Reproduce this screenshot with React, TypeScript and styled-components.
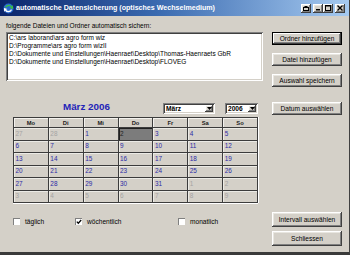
import React from "react";
import styled, { createGlobalStyle, css } from "styled-components";

const Global = createGlobalStyle`
  html, body { margin: 0; padding: 0; background: #d4d0c8; }
  body { font-family: "Liberation Sans", Arial, sans-serif; }
  * { box-sizing: border-box; }
`;

const raised = css`
  box-shadow: inset -1px -1px #404040, inset 1px 1px #ffffff,
    inset -2px -2px #808080, inset 2px 2px #e8e6e0;
`;
const sunken = css`
  box-shadow: inset 1px 1px #808080, inset -1px -1px #ffffff,
    inset 2px 2px #404040, inset -2px -2px #d4d0c8;
`;

const Window = styled.div`
  width: 350px;
  height: 255px;
  overflow: hidden;
  background: #d4d0c8;
  border-bottom: 3px solid #3a3a3a;
  border-right: 1px solid #404040;
  display: flex;
  flex-direction: column;
`;

const TitleBar = styled.div`
  height: 16px;
  flex: none;
  display: flex;
  align-items: center;
  padding: 0 4px 0 3px;
  background: linear-gradient(to right, #0a246a 0%, #3a6ab0 45%, #a6caf0 100%);
`;

const TitleText = styled.span`
  margin-left: 2px;
  color: #ffffff;
  font-weight: bold;
  font-size: 7.1px;
  white-space: nowrap;
`;

const CaptionGroup = styled.div`
  margin-left: auto;
  display: flex;
  align-items: center;
`;

const CaptionButton = styled.div<{ $gap?: number }>`
  width: 10px;
  height: 9px;
  margin-left: ${(p) => p.$gap ?? 0}px;
  background: #d4d0c8;
  ${raised};
  display: flex;
  align-items: center;
  justify-content: center;
`;

const Body = styled.div`
  flex: 1;
  padding-left: 6px;
  display: flex;
  flex-direction: column;
`;

const Section = styled.div<{ $h: number }>`
  height: ${(p) => p.$h}px;
  display: grid;
  grid-template-columns: 257px 70px;
  column-gap: 9px;
`;

const LeftCol = styled.div`
  display: flex;
  flex-direction: column;
`;

const Label = styled.div`
  margin-top: 6px;
  height: 8px;
  line-height: 8px;
  font-size: 6.5px;
  color: #000;
  white-space: nowrap;
`;

const ListBox = styled.div`
  margin-top: 2px;
  height: 49px;
  background: #ffffff;
  ${sunken};
  padding: 2px 3px;
`;

const ListItem = styled.div`
  height: 8px;
  line-height: 8px;
  font-size: 6.5px;
  color: #000;
  white-space: nowrap;
`;

const ButtonColumn = styled.div<{ $top: number; $gap: number }>`
  padding-top: ${(p) => p.$top}px;
  display: flex;
  flex-direction: column;
  gap: ${(p) => p.$gap}px;
`;

const Button = styled.div<{ $h: number; $default?: boolean }>`
  height: ${(p) => p.$h}px;
  width: 70px;
  background: #d4d0c8;
  display: flex;
  align-items: center;
  justify-content: center;
  font-size: 6.6px;
  color: #000;
  white-space: nowrap;
  ${(p) =>
    p.$default
      ? css`
          box-shadow: inset 0 0 0 1px #000, inset -2px -2px #404040,
            inset 2px 2px #ffffff, inset -3px -3px #808080;
        `
      : raised};
`;

const CalendarBlock = styled.div`
  margin-left: 7px;
  width: 245px;
  padding-top: 15px;
`;

const CalHeader = styled.div`
  height: 12px;
  display: flex;
  align-items: flex-start;
`;

const MonthTitle = styled.div`
  margin-left: 50px;
  margin-top: -1px;
  font-size: 9.8px;
  line-height: 12px;
  font-weight: bold;
  color: #1f24b8;
  white-space: nowrap;
`;

const ComboGroup = styled.div`
  margin-left: auto;
  margin-top: 1px;
  display: flex;
  gap: 10px;
`;

const Combo = styled.div<{ $w: number }>`
  width: ${(p) => p.$w}px;
  height: 11px;
  background: #fff;
  ${sunken};
  display: flex;
  align-items: center;
  padding: 2px;
  font-size: 6.6px;
  font-weight: bold;
  color: #000;
`;

const ComboText = styled.span`
  flex: 1;
  padding-left: 1px;
`;

const ComboArrow = styled.div`
  width: 8px;
  height: 7px;
  background: #d4d0c8;
  ${raised};
  display: flex;
  align-items: center;
  justify-content: center;
`;

const CalGrid = styled.div`
  margin-top: 3px;
  width: 245px;
  display: grid;
  grid-template-columns: repeat(7, 1fr);
  grid-template-rows: 9px repeat(6, 11.5px);
  gap: 1px;
  padding: 1px;
  background: #3c3c3c;
  box-shadow: 0 1px #ffffff, 1px 0 #ffffff;
`;

const HeadCell = styled.div`
  background: #d4d0c8;
  box-shadow: inset 1px 1px #f4f2ee;
  font-size: 5.8px;
  font-weight: bold;
  color: #202020;
  display: flex;
  align-items: center;
  justify-content: center;
`;

const DayCell = styled.div<{ $other?: boolean; $sel?: boolean }>`
  background: ${(p) => (p.$sel ? "#7c7c7c" : "#d4d0c8")};
  box-shadow: ${(p) => (p.$sel ? "inset 1px 1px #202020" : "inset 1px 1px #ecebe6")};
  font-size: 6.4px;
  color: ${(p) => (p.$sel ? "#202020" : p.$other ? "#a4a4a4" : "#2b2ba6")};
  display: flex;
  align-items: center;
  padding-left: 1.5px;
  padding-bottom: 1px;
`;

const CheckRow = styled.div`
  margin-left: 7px;
  padding-top: 14px;
  display: grid;
  grid-template-columns: 62px 103px auto;
  align-items: start;
`;

const CheckItem = styled.div`
  display: flex;
  align-items: center;
  gap: 5px;
  height: 7px;
`;

const CheckBox = styled.div`
  width: 7px;
  height: 7px;
  background: #fff;
  box-shadow: inset 1px 1px #808080, inset -1px -1px #ffffff;
  display: flex;
  align-items: center;
  justify-content: center;
`;

const CheckLabel = styled.span`
  font-size: 6.6px;
  color: #000;
  white-space: nowrap;
`;

const AppIcon = () => (
  <svg width="11" height="11" viewBox="0 0 11 11">
    <circle cx="5.5" cy="5.5" r="5" fill="#2a6ad0" />
    <path d="M2 4 A4 4 0 0 1 9 3.5 L10 2 L10 6 L6.5 5 L8 4.2 A3 3 0 0 0 3 4.8 Z" fill="#3cc040" />
    <path d="M9 7 A4 4 0 0 1 2 7.5 L1 9 L1 5 L4.5 6 L3 6.8 A3 3 0 0 0 8 6.2 Z" fill="#ffffff" />
  </svg>
);

const Arrow = () => (
  <svg width="5" height="3" viewBox="0 0 5 3">
    <path d="M0 0 H5 L2.5 3 Z" fill="#000" />
  </svg>
);

const Check = () => (
  <svg width="6" height="6" viewBox="0 0 6 6">
    <path d="M0.8 2.6 L2.3 4.2 L5.2 1" stroke="#000" strokeWidth="1.3" fill="none" />
  </svg>
);

const paths = [
  "C:\\ars laborand\\ars agro form wiz",
  "D:\\Programme\\ars agro form wizII",
  "D:\\Dokumente und Einstellungen\\Haenraet\\Desktop\\Thomas-Haenraets GbR",
  "D:\\Dokumente und Einstellungen\\Haenraet\\Desktop\\FLOVEG",
];

const weekdays = ["Mo", "Di", "Mi", "Do", "Fr", "Sa", "So"];

type Day = { n: number; other?: boolean; sel?: boolean };
const days: Day[] = [
  { n: 27, other: true },
  { n: 28, other: true },
  ...Array.from({ length: 31 }, (_, i) => ({ n: i + 1, sel: i + 1 === 2 })),
  ...Array.from({ length: 9 }, (_, i) => ({ n: i + 1, other: true })),
];

export default function App() {
  return (
    <>
      <Global />
      <Window>
        <TitleBar>
          <AppIcon />
          <TitleText>automatische Datensicherung (optisches Wechselmedium)</TitleText>
          <CaptionGroup>
            <CaptionButton>
              <svg width="6" height="5" viewBox="0 0 6 5">
                <rect x="0.5" y="1.5" width="5" height="3" fill="none" stroke="#000" />
                <rect x="1.5" y="0" width="3" height="1.5" fill="#000" />
              </svg>
            </CaptionButton>
            <CaptionButton $gap={2}>
              <svg width="5" height="6" viewBox="0 0 5 6">
                <rect x="0" y="4" width="4" height="1.5" fill="#000" />
              </svg>
            </CaptionButton>
            <CaptionButton>
              <svg width="6" height="6" viewBox="0 0 6 6">
                <rect x="0.5" y="0.5" width="5" height="5" fill="none" stroke="#000" />
                <rect x="0" y="0" width="6" height="1.5" fill="#000" />
              </svg>
            </CaptionButton>
            <CaptionButton $gap={2}>
              <svg width="6" height="6" viewBox="0 0 6 6">
                <path d="M0.5 0.5 L5.5 5.5 M5.5 0.5 L0.5 5.5" stroke="#000" strokeWidth="1.3" />
              </svg>
            </CaptionButton>
          </CaptionGroup>
        </TitleBar>
        <Body>
          <Section $h={71}>
            <LeftCol>
              <Label>folgende Dateien und Ordner automatisch sichern:</Label>
              <ListBox>
                {paths.map((p) => (
                  <ListItem key={p}>{p}</ListItem>
                ))}
              </ListBox>
            </LeftCol>
            <ButtonColumn $top={16} $gap={8}>
              <Button $h={13} $default>Ordner hinzufügen</Button>
              <Button $h={13}>Datei hinzufügen</Button>
              <Button $h={13}>Auswahl speichern</Button>
            </ButtonColumn>
          </Section>
          <Section $h={117}>
            <CalendarBlock>
              <CalHeader>
                <MonthTitle>März 2006</MonthTitle>
                <ComboGroup>
                  <Combo $w={52}>
                    <ComboText>März</ComboText>
                    <ComboArrow><Arrow /></ComboArrow>
                  </Combo>
                  <Combo $w={33}>
                    <ComboText>2006</ComboText>
                    <ComboArrow><Arrow /></ComboArrow>
                  </Combo>
                </ComboGroup>
              </CalHeader>
              <CalGrid>
                {weekdays.map((w) => (
                  <HeadCell key={w}>{w}</HeadCell>
                ))}
                {days.map((d, i) => (
                  <DayCell key={i} $other={d.other} $sel={d.sel}>
                    {d.n}
                  </DayCell>
                ))}
              </CalGrid>
            </CalendarBlock>
            <ButtonColumn $top={15} $gap={0}>
              <Button $h={13}>Datum auswählen</Button>
            </ButtonColumn>
          </Section>
          <Section $h={48}>
            <CheckRow>
              <CheckItem>
                <CheckBox />
                <CheckLabel>täglich</CheckLabel>
              </CheckItem>
              <CheckItem>
                <CheckBox>
                  <Check />
                </CheckBox>
                <CheckLabel>wöchentlich</CheckLabel>
              </CheckItem>
              <CheckItem>
                <CheckBox />
                <CheckLabel>monatlich</CheckLabel>
              </CheckItem>
            </CheckRow>
            <ButtonColumn $top={8} $gap={4}>
              <Button $h={15}>Intervall auswählen</Button>
              <Button $h={15}>Schliessen</Button>
            </ButtonColumn>
          </Section>
        </Body>
      </Window>
    </>
  );
}
